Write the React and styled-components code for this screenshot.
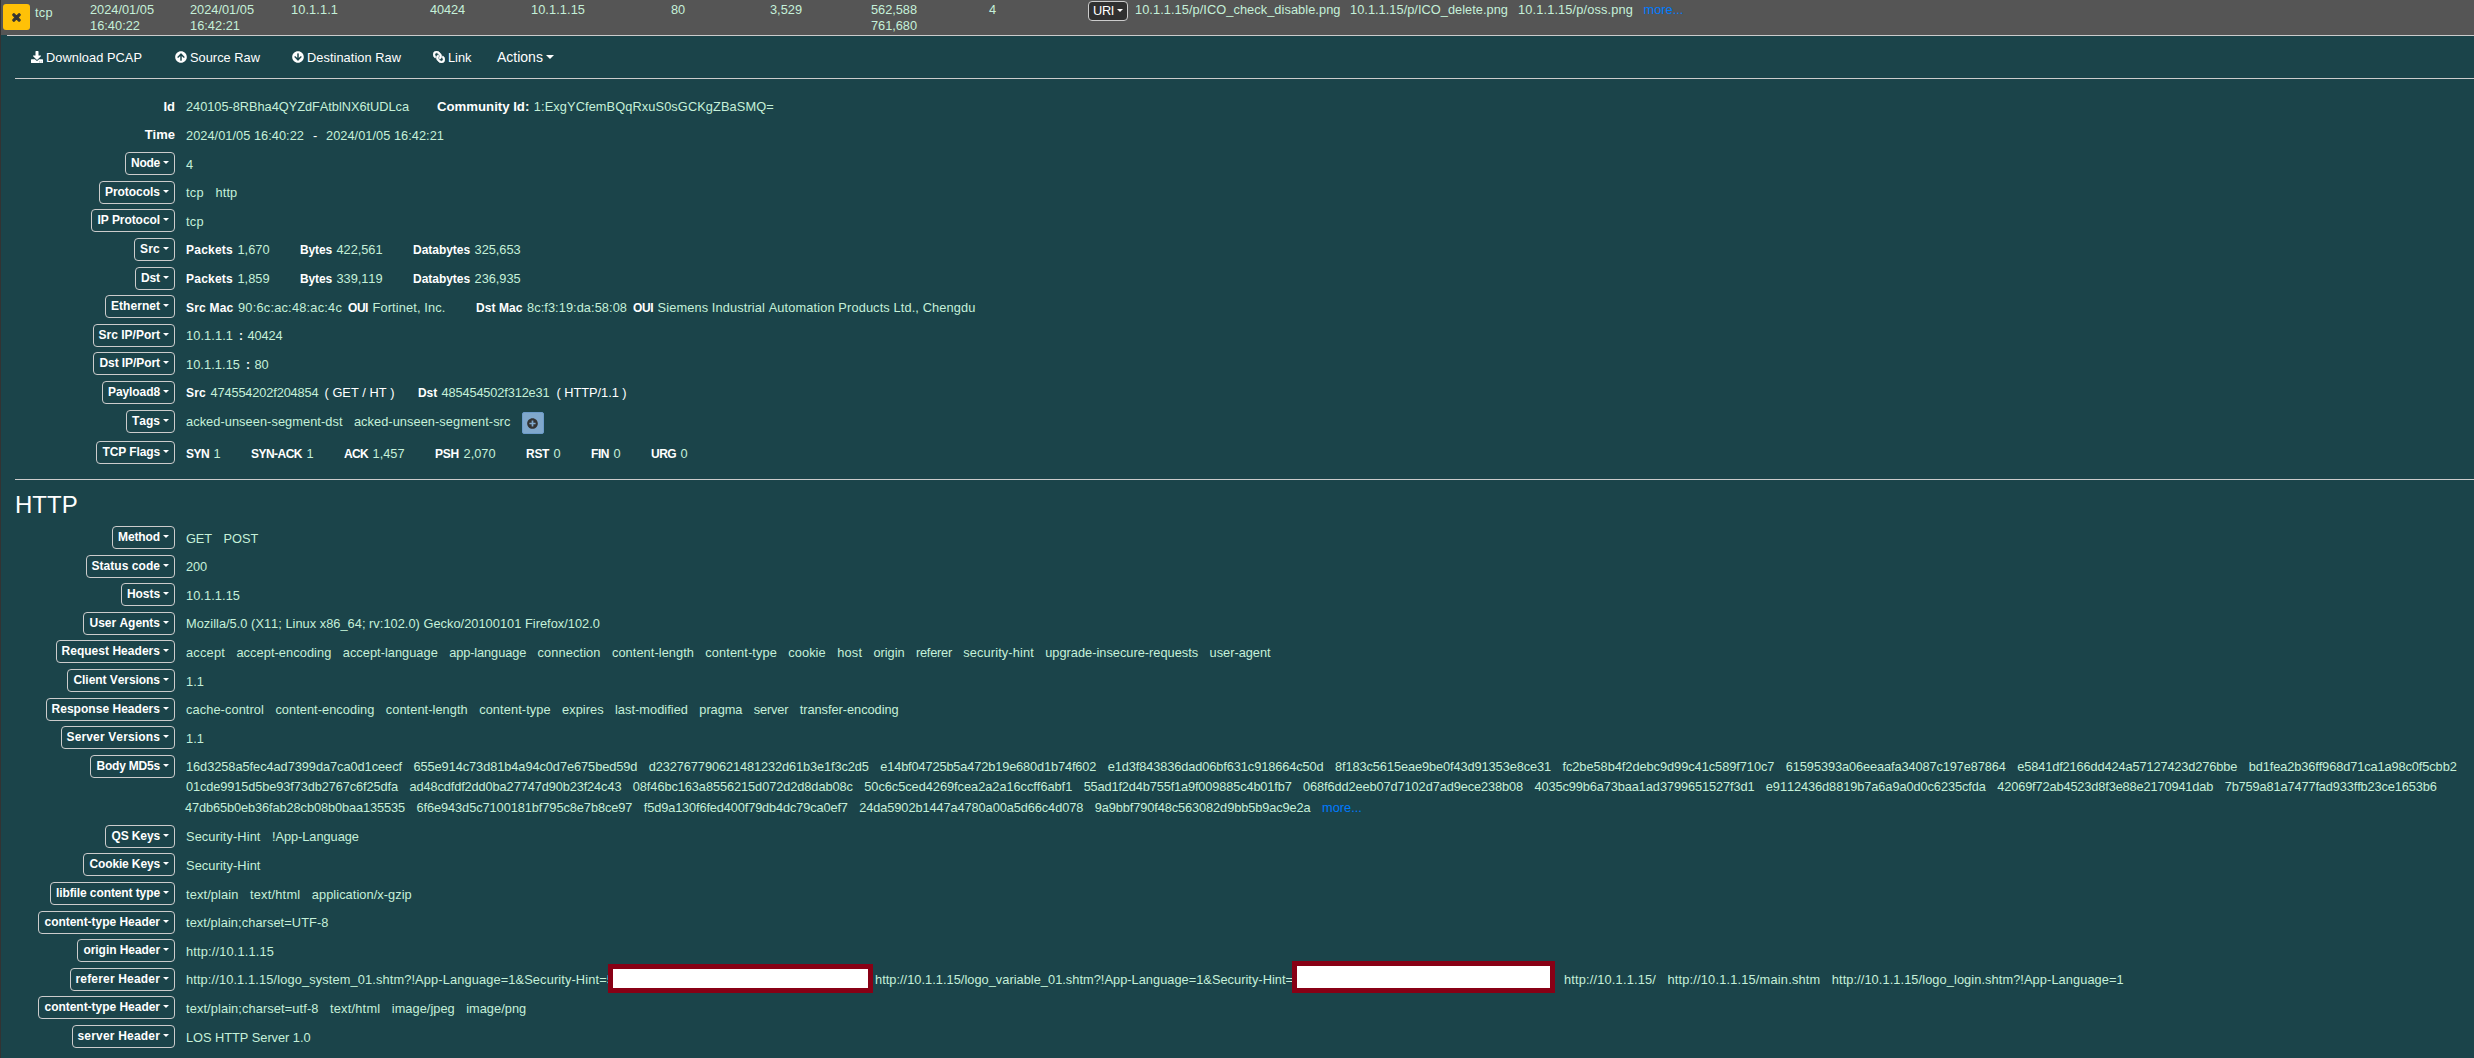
import React from 'react';
import styled, { createGlobalStyle, css } from 'styled-components';
import { FaDownload, FaArrowCircleUp, FaArrowCircleDown, FaLink, FaTimes, FaPlusCircle } from 'react-icons/fa';

const FAMILY = '"Liberation Sans", Arial, sans-serif';

const REGULAR = {
  px: 12.8,
  fallback: 7,
  widths: { 3: 'ijlIf', 4: ' !(),-./:;rt', 5.5: 'v', 6.5: 'xykz', 7.5: 'Z', 8: 'F+=X', 8.5: 'Y', 9: 'ABCDEHKNPRSUVw&', 10: 'GOQ', 11: 'mM', 12: 'W' },
};
const BOLD = {
  px: 12,
  fallback: 7,
  widths: { 3: 'ilI/', 3.5: ' ', 4: 'tf-:', 5: 'r', 6: 'yx', 8: 'ABCDEHKNPRSUVX', 9: 'GOQw', 10: 'Mm', 11: 'W' },
};

const pen = document.createElement('canvas').getContext('2d');

function tracking(text, face, width) {
  const target = width || [...text].reduce((sum, glyph) => {
    const hit = Object.keys(face.widths).find((key) => face.widths[key].includes(glyph));
    return sum + (hit ? Number(hit) : face.fallback);
  }, 0);
  pen.font = `${face === BOLD ? 'bold ' : ''}${face.px}px ${FAMILY}`;
  pen.fontKerning = 'none';
  return (target - pen.measureText(text).width) / text.length;
}

const GlobalStyle = createGlobalStyle`
  * { box-sizing: border-box; }
  body { margin: 0; background: #1b444a; }
`;

const Page = styled.div`
  width: 2474px;
  height: 1058px;
  overflow: hidden;
  border-left: 1px solid #333;
  background: #1b444a;
  color: #c5f0d9;
  font: 12.8px/19px ${FAMILY};
  font-kerning: none;
  white-space: nowrap;
`;

const SessionRow = styled.div`
  display: grid;
  grid-template-columns: 34px 55px 100px 101px 139px 101px 140px 99px 101px 118px 99px 1fr;
  height: 35px;
  background: #555;
  line-height: 16px;
`;

const Cell = styled.div`
  padding-top: ${(p) => p.$top || 2}px;
`;

const CellLine = styled.div`
  height: 16px;
`;

const CloseButton = styled.button`
  display: flex;
  align-items: center;
  justify-content: center;
  width: 27px;
  height: 26px;
  margin: 4px 0 0 2px;
  padding: 0;
  border: 0;
  border-radius: 3px;
  background: #ffc107;
  color: #333;
  font-size: 11px;

  svg { stroke: currentColor; stroke-width: 50; }
`;

const UriCell = styled.div`
  display: flex;
  align-items: flex-start;
  padding-top: 1px;
  line-height: 18px;
`;

const Caret = styled.span`
  display: inline-block;
  margin-left: 3px;
  border: ${(p) => p.$size || 3}px solid transparent;
  border-top-color: currentColor;
  border-bottom: 0;
  vertical-align: 3px;
`;

const UriButton = styled.span`
  height: 20px;
  margin-right: 7px;
  padding: 0 4px;
  border: 1px solid #ccc;
  border-radius: 4px;
  background: #303030;
  color: #fff;
`;

const Detail = styled.div`
  margin-left: 6px;
  padding-left: 8px;
  border-top: 1px solid #ccc;
`;

const Toolbar = styled.div`
  display: flex;
  align-items: center;
  height: 43px;
  padding-left: 16px;
  border-bottom: 1px solid #ccc;
  color: #fff;
`;

const Tool = styled.span`
  display: flex;
  align-items: center;
  width: ${(p) => p.$w}px;
  font-size: ${(p) => p.$size || 12.8}px;

  svg {
    width: 12px;
    height: 12px;
    margin-right: 3px;
    ${(p) => p.$mirror && css`
      transform: scaleX(-1);
      stroke: currentColor;
      stroke-width: 24;
    `}
  }
`;

const Fields = styled.div`
  padding-top: ${(p) => p.$top || 0}px;
`;

const Field = styled.div`
  display: grid;
  grid-template-columns: 160px 1fr;
  column-gap: 11px;
  height: ${(p) => p.$h || 28.6}px;
`;

const Label = styled.div`
  display: flex;
  align-items: flex-start;
  justify-content: flex-end;
`;

const PlainLabel = styled.b`
  padding-top: 1.5px;
  color: #fff;
  font-size: 13px;
`;

const LabelButton = styled.span`
  height: 23px;
  padding: 0 5px;
  border: 1px solid #ccc;
  border-radius: 4px;
  color: #fff;
  font-size: 12px;
  font-weight: bold;
  line-height: 21px;
`;

const Value = styled.div`
  padding-top: ${(p) => p.$top || 2.5}px;
  line-height: 20.5px;
`;

const ValueLine = styled.div`
  display: flex;
  margin-left: ${(p) => p.$shift || 0}px;
`;

const ItemBox = styled.span`
  margin-right: ${(p) => p.$gap}px;
  ${(p) => p.$plain && css`color: #fff;`}
`;

const StrongBox = styled.b`
  margin-right: 4.5px;
  color: #fff;
  font-size: ${(p) => p.$size || 12}px;
`;

const More = styled.a`
  color: #007bff;
`;

const AddTag = styled.span`
  display: flex;
  align-items: center;
  justify-content: center;
  width: 22px;
  height: 22px;
  border: 1px solid #6c9bc9;
  border-radius: 2px;
  background: #80a8cc;
  color: #333;
  font-size: 11px;
`;

const Rule = styled.div`
  height: 1px;
  background: #ccc;
`;

const Heading = styled.h4`
  height: 46px;
  margin: 0;
  padding-top: 10px;
  color: #fff;
  font-size: 24px;
  font-weight: normal;
  line-height: 29px;
`;

const Redaction = styled.span`
  flex: none;
  width: ${(p) => p.$w}px;
  height: ${(p) => p.$h}px;
  margin: ${(p) => p.$m};
  border: 5px solid #880015;
  background: #fff;
`;

const Text = ({ children, bold, width }) => (
  <span style={{ letterSpacing: tracking(children, bold ? BOLD : REGULAR, width) }}>{children}</span>
);

const Item = ({ gap = 11.4, plain, width, children }) => (
  <ItemBox $gap={gap} $plain={plain}><Text width={width}>{children}</Text></ItemBox>
);

const Strong = ({ children }) => <StrongBox><Text bold>{children}</Text></StrongBox>;

const LabeledField = ({ name, h, top, children }) => (
  <Field $h={h}>
    <Label><LabelButton><Text bold>{name}</Text><Caret /></LabelButton></Label>
    <Value $top={top}>{children}</Value>
  </Field>
);

const Items = ({ list, more, shift }) => (
  <ValueLine $shift={shift}>
    {list.map((text) => <Item key={text}>{text}</Item>)}
    {more && <More>more...</More>}
  </ValueLine>
);

const Counts = ({ pairs }) => (
  <ValueLine>
    {pairs.map(([name, value, gap = 30.5], i) => (
      <React.Fragment key={i}>
        <Strong>{name}</Strong>
        <Item gap={gap}>{value}</Item>
      </React.Fragment>
    ))}
  </ValueLine>
);

const sessionCells = [
  ['2024/01/05', '16:40:22'],
  ['2024/01/05', '16:42:21'],
  ['10.1.1.1'],
  ['40424'],
  ['10.1.1.15'],
  ['80'],
  ['3,529'],
  ['562,588', '761,680'],
  ['4'],
];

const md5Lines = [
  ['16d3258a5fec4ad7399da7ca0d1ceecf', '655e914c73d81b4a94c0d7e675bed59d', 'd232767790621481232d61b3e1f3c2d5', 'e14bf04725b5a472b19e680d1b74f602', 'e1d3f843836dad06bf631c918664c50d', '8f183c5615eae9be0f43d91353e8ce31', 'fc2be58b4f2debc9d99c41c589f710c7', '61595393a06eeaafa34087c197e87864', 'e5841df2166dd424a57127423d276bbe', 'bd1fea2b36ff968d71ca1a98c0f5cbb2'],
  ['01cde9915d5be93f73db2767c6f25dfa', 'ad48cdfdf2dd0ba27747d90b23f24c43', '08f46bc163a8556215d072d2d8dab08c', '50c6c5ced4269fcea2a2a16ccff6abf1', '55ad1f2d4b755f1a9f009885c4b01fb7', '068f6dd2eeb07d7102d7ad9ece238b08', '4035c99b6a73baa1ad3799651527f3d1', 'e9112436d8819b7a6a9a0d0c6235cfda', '42069f72ab4523d8f3e88e2170941dab', '7b759a81a7477fad933ffb23ce1653b6'],
  ['47db65b0eb36fab28cb08b0baa135535', '6f6e943d5c7100181bf795c8e7b8ce97', 'f5d9a130f6fed400f79db4dc79ca0ef7', '24da5902b1447a4780a00a5d66c4d078', '9a9bbf790f48c563082d9bb5b9ac9e2a'],
];

const httpFields = [
  ['Method', ['GET', 'POST']],
  ['Status code', ['200']],
  ['Hosts', ['10.1.1.15']],
  ['User Agents', ['Mozilla/5.0 (X11; Linux x86_64; rv:102.0) Gecko/20100101 Firefox/102.0']],
  ['Request Headers', ['accept', 'accept-encoding', 'accept-language', 'app-language', 'connection', 'content-length', 'content-type', 'cookie', 'host', 'origin', 'referer', 'security-hint', 'upgrade-insecure-requests', 'user-agent']],
  ['Client Versions', ['1.1']],
  ['Response Headers', ['cache-control', 'content-encoding', 'content-length', 'content-type', 'expires', 'last-modified', 'pragma', 'server', 'transfer-encoding']],
  ['Server Versions', ['1.1']],
];

const headerFields = [
  ['QS Keys', ['Security-Hint', '!App-Language']],
  ['Cookie Keys', ['Security-Hint']],
  ['libfile content type', ['text/plain', 'text/html', 'application/x-gzip']],
  ['content-type Header', ['text/plain;charset=UTF-8']],
  ['origin Header', ['http://10.1.1.15']],
];

export default function App() {
  return (
    <Page>
      <GlobalStyle />
      <SessionRow>
        <CloseButton><FaTimes /></CloseButton>
        <Cell $top={5}><Text>tcp</Text></Cell>
        {sessionCells.map((lines, i) => (
          <Cell key={i}>
            {lines.map((line) => <CellLine key={line}><Text>{line}</Text></CellLine>)}
          </Cell>
        ))}
        <UriCell>
          <UriButton><Text>URI</Text><Caret /></UriButton>
          <Item gap={9.5}>10.1.1.15/p/ICO_check_disable.png</Item>
          <Item gap={10}>10.1.1.15/p/ICO_delete.png</Item>
          <Item gap={10.5}>10.1.1.15/p/oss.png</Item>
          <More>more...</More>
        </UriCell>
      </SessionRow>

      <Detail>
        <Toolbar>
          <Tool $w={144}><FaDownload /><Text>Download PCAP</Text></Tool>
          <Tool $w={117}><FaArrowCircleUp /><Text>Source Raw</Text></Tool>
          <Tool $w={141}><FaArrowCircleDown /><Text>Destination Raw</Text></Tool>
          <Tool $w={64} $mirror><FaLink /><Text>Link</Text></Tool>
          <Tool $size={14}>Actions<Caret $size={4} /></Tool>
        </Toolbar>

        <Fields $top={16}>
          <Field>
            <Label><PlainLabel>Id</PlainLabel></Label>
            <Value $top={1.5}>
              <ValueLine>
                <Item gap={28}>240105-8RBha4QYZdFAtblNX6tUDLca</Item>
                <StrongBox $size={13.2}>Community Id:</StrongBox>
                <Item>1:ExgYCfemBQqRxuS0sGCKgZBaSMQ=</Item>
              </ValueLine>
            </Value>
          </Field>
          <Field>
            <Label><PlainLabel>Time</PlainLabel></Label>
            <Value $top={2}>
              <ValueLine>
                <Item gap={9}>2024/01/05 16:40:22</Item>
                <Item gap={9} plain>-</Item>
                <Item>2024/01/05 16:42:21</Item>
              </ValueLine>
            </Value>
          </Field>
          <LabeledField name="Node"><Items list={['4']} /></LabeledField>
          <LabeledField name="Protocols"><Items list={['tcp', 'http']} /></LabeledField>
          <LabeledField name="IP Protocol"><Items list={['tcp']} /></LabeledField>
          <LabeledField name="Src"><Counts pairs={[['Packets', '1,670'], ['Bytes', '422,561'], ['Databytes', '325,653']]} /></LabeledField>
          <LabeledField name="Dst"><Counts pairs={[['Packets', '1,859'], ['Bytes', '339,119'], ['Databytes', '236,935']]} /></LabeledField>
          <LabeledField name="Ethernet">
            <Counts pairs={[['Src Mac', '90:6c:ac:48:ac:4c', 6], ['OUI', 'Fortinet, Inc.'], ['Dst Mac', '8c:f3:19:da:58:08', 6], ['OUI', 'Siemens Industrial Automation Products Ltd., Chengdu']]} />
          </LabeledField>
          <LabeledField name="Src IP/Port"><ValueLine><Item gap={6}>10.1.1.1</Item><Strong>:</Strong><Item>40424</Item></ValueLine></LabeledField>
          <LabeledField name="Dst IP/Port"><ValueLine><Item gap={6}>10.1.1.15</Item><Strong>:</Strong><Item>80</Item></ValueLine></LabeledField>
          <LabeledField name="Payload8">
            <ValueLine>
              <Strong>Src</Strong><Item gap={6}>474554202f204854</Item><Item gap={23.5} plain>( GET / HT )</Item>
              <Strong>Dst</Strong><Item gap={7}>485454502f312e31</Item><Item plain>( HTTP/1.1 )</Item>
            </ValueLine>
          </LabeledField>
          <LabeledField name="Tags" h={31.2}>
            <ValueLine>
              <Item>acked-unseen-segment-dst</Item><Item>acked-unseen-segment-src</Item>
              <AddTag><FaPlusCircle /></AddTag>
            </ValueLine>
          </LabeledField>
          <LabeledField name="TCP Flags" h={38.4} top={3}>
            <Counts pairs={[['SYN', '1'], ['SYN-ACK', '1'], ['ACK', '1,457'], ['PSH', '2,070'], ['RST', '0'], ['FIN', '0'], ['URG', '0']]} />
          </LabeledField>
        </Fields>

        <Rule />
        <Heading>HTTP</Heading>
        <Fields>
          {httpFields.map(([name, list]) => (
            <LabeledField key={name} name={name}><Items list={list} /></LabeledField>
          ))}
          <LabeledField name="Body MD5s" h={70} top={2}>
            {md5Lines.map((list, i) => <Items key={list[0]} list={list} more={i === 2} shift={i === 2 ? -1 : 0} />)}
          </LabeledField>
          {headerFields.map(([name, list]) => (
            <LabeledField key={name} name={name}><Items list={list} /></LabeledField>
          ))}
          <LabeledField name="referer Header">
            <ValueLine>
              <Item gap={0} width={428}>http://10.1.1.15/logo_system_01.shtm?!App-Language=1&amp;Security-Hint=5</Item>
              <Redaction $w={265} $h={29} $m="-6px 2px -6px -6px" />
              <Item gap={0} width={418}>http://10.1.1.15/logo_variable_01.shtm?!App-Language=1&amp;Security-Hint=</Item>
              <Redaction $w={263} $h={32} $m="-9px 9px -6px -1px" />
              <Item>http://10.1.1.15/</Item>
              <Item>http://10.1.1.15/main.shtm</Item>
              <Item>http://10.1.1.15/logo_login.shtm?!App-Language=1</Item>
            </ValueLine>
          </LabeledField>
          <LabeledField name="content-type Header"><Items list={['text/plain;charset=utf-8', 'text/html', 'image/jpeg', 'image/png']} /></LabeledField>
          <LabeledField name="server Header"><Items list={['LOS HTTP Server 1.0']} /></LabeledField>
        </Fields>
      </Detail>
    </Page>
  );
}
